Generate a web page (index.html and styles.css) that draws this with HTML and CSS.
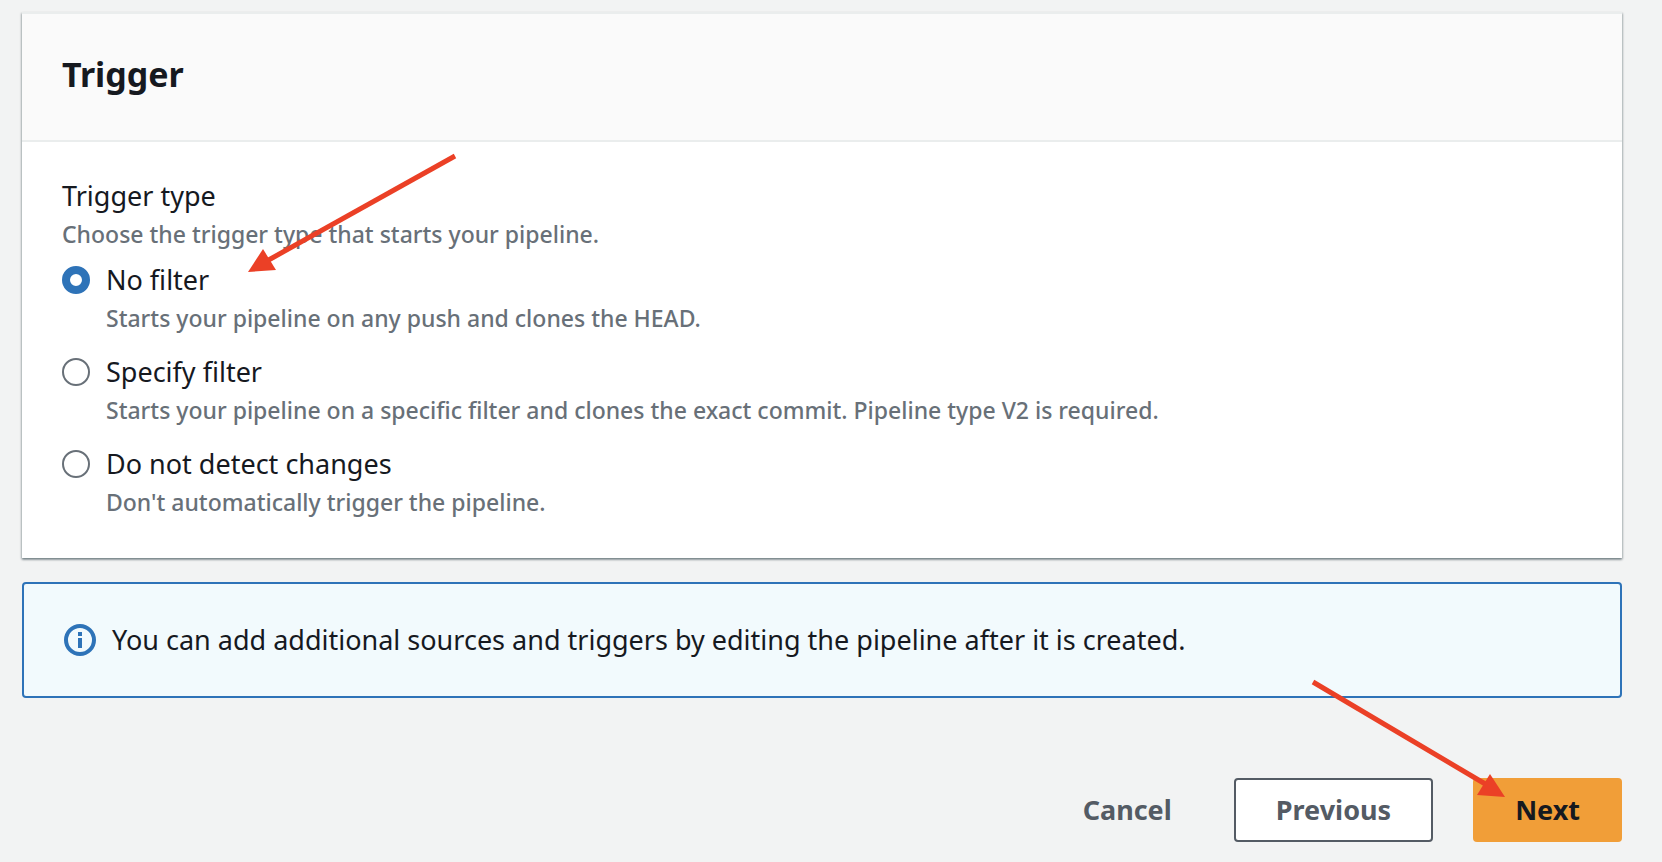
FILE: index.html
```html
<!DOCTYPE html>
<html lang="en">
<head>
<meta charset="utf-8">
<title>Trigger</title>
<link rel="stylesheet" href="styles.css">
</head>
<body>
<main class="page">
  <section class="card">
    <header class="card-header"><h2 class="card-title">Trigger</h2></header>
    <fieldset class="card-body" aria-describedby="type-hint">
      <legend class="legend">Trigger type</legend>
      <p class="hint" id="type-hint">Choose the trigger type that starts your pipeline.</p>
      <div class="options">
        <div class="option">
          <input class="radio" type="radio" name="trigger" id="no-filter" aria-describedby="no-filter-hint" checked>
          <label class="label" for="no-filter">No filter</label>
          <p class="hint option-hint" id="no-filter-hint">Starts your pipeline on any push and clones the HEAD.</p>
        </div>
        <div class="option">
          <input class="radio" type="radio" name="trigger" id="specify" aria-describedby="specify-hint">
          <label class="label" for="specify">Specify filter</label>
          <p class="hint option-hint" id="specify-hint">Starts your pipeline on a specific filter and clones the exact commit. Pipeline type V2 is required.</p>
        </div>
        <div class="option">
          <input class="radio" type="radio" name="trigger" id="no-detect" aria-describedby="no-detect-hint">
          <label class="label" for="no-detect">Do not detect changes</label>
          <p class="hint option-hint" id="no-detect-hint">Don't automatically trigger the pipeline.</p>
        </div>
      </div>
    </fieldset>
    <svg class="arrow arrow-option" width="220" height="130" viewBox="0 0 220 130" aria-hidden="true">
      <path class="arrow-line" d="M213 10 23 116"/>
      <path class="arrow-head" d="M6 126 21 103 34 124z"/>
    </svg>
  </section>

  <div class="alert" role="status">
    <svg class="alert-icon" width="32" height="32" viewBox="0 0 32 32" aria-hidden="true">
      <circle cx="16" cy="16" r="14" fill="none" stroke="currentColor" stroke-width="4"/>
      <path d="M14 8h4v4h-4zM14 14h4v10h-4z" fill="currentColor"/>
    </svg>
    <p class="alert-text">You can add additional sources and triggers by editing the pipeline after it is created.</p>
  </div>

  <div class="actions">
    <button class="button button-link" type="button">Cancel</button>
    <button class="button button-normal" type="button">Previous</button>
    <div class="next">
      <button class="button button-primary" type="button">Next</button>
      <svg class="arrow arrow-next" width="200" height="124" viewBox="0 0 200 124" aria-hidden="true">
        <path class="arrow-line" d="M7 6 181 109"/>
        <path class="arrow-head" d="M199 121 184 98 171 119z"/>
      </svg>
    </div>
  </div>
</main>
</body>
</html>
```
FILE: styles.css
```css
* { box-sizing: border-box; }
body {
  margin: 0;
  background: #f2f3f3;
  color: #16191f;
  font-family: "Noto Sans", "Open Sans", sans-serif;
  font-size: 27px;
  line-height: 44px;
}
p, h2 { margin: 0; }
.page { padding: 12px 40px 20px 22px; }
.card {
  position: relative;
  background: #fff;
  border-top: 2px solid #eaeded;
  box-shadow: 0 2px 2px 0 rgba(0, 28, 36, 0.3), 1px 1px 2px 0 rgba(0, 28, 36, 0.2), -1px 1px 2px 0 rgba(0, 28, 36, 0.2);
}
.card-header {
  padding: 38px 40px 44px;
  background: #fafafa;
  border-bottom: 2px solid #eaeded;
}
.card-title { font-size: 34px; font-weight: 700; line-height: 44px; }
.card-body { margin: 0; padding: 32px 40px 40px; border: 0; min-width: 0; }
.legend { float: left; width: 100%; padding: 0; }
.hint { clear: both; color: #687078; font-size: 23px; font-weight: 500; line-height: 32px; }
.options { display: grid; gap: 16px; margin-top: 8px; }
.option {
  display: grid;
  grid-template-columns: 28px 1fr;
  column-gap: 16px;
  align-items: center;
}
.option-hint { grid-column: 2; }
.label { justify-self: start; }
.radio {
  appearance: none;
  width: 28px;
  height: 28px;
  margin: 0;
  border: 2px solid #687078;
  border-radius: 50%;
  background: #fff;
}
.radio:checked { border: 8px solid #2e73b8; }
.alert {
  display: flex;
  align-items: center;
  gap: 16px;
  margin-top: 24px;
  padding: 34px 40px;
  border: 2px solid #2e73b8;
  border-radius: 4px;
  background: #f2fafd;
}
.alert-icon { flex: none; color: #2e73b8; }
.actions {
  display: flex;
  justify-content: flex-end;
  gap: 40px;
  margin-top: 80px;
}
.button {
  height: 64px;
  padding: 0 40px;
  border: 2px solid transparent;
  border-radius: 4px;
  background: transparent;
  color: #545b64;
  font: inherit;
  font-weight: 700;
  line-height: 40px;
}
.button-link { padding: 0 20px; }
.button-normal { border-color: #545b64; background: #fff; }
.button-primary { background: #f19e38; color: #16191f; }
.next { position: relative; }
.arrow { position: absolute; pointer-events: none; }
.arrow-option { left: 220px; top: 132px; }
.arrow-next { right: 116px; top: -102px; }
.arrow-line { stroke: #eb4026; stroke-width: 5; fill: none; }
.arrow-head { fill: #eb4026; }
```
